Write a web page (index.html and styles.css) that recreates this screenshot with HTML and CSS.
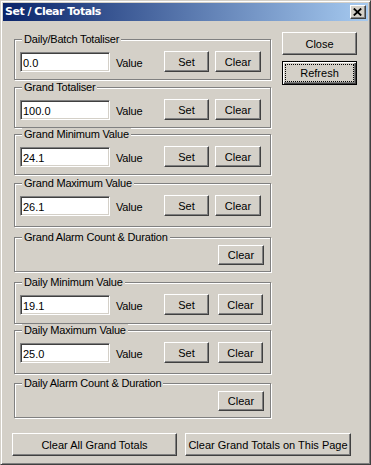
FILE: index.html
```html
<!DOCTYPE html>
<html>
<head>
<meta charset="utf-8">
<link rel="stylesheet" href="styles.css">
</head>
<body>
<div class="window">
  <div class="titlebar">
    <span class="title">Set / Clear Totals</span>
    <button class="xbtn" aria-label="Close"><svg width="9" height="8" viewBox="0 0 9 8"><path d="M0.8 0.5 L8.2 7.5 M8.2 0.5 L0.8 7.5" stroke="#000" stroke-width="1.8" fill="none"/></svg></button>
  </div>
  <div class="client">
    <div class="main">
      <div class="groups">
        <div class="group g1">
          <div class="legend">Daily/Batch Totaliser</div>
          <div class="row"><input class="field" value="0.0"><span class="unit">Value</span><button class="btn set">Set</button><button class="btn clear">Clear</button></div>
        </div>
        <div class="group g2">
          <div class="legend">Grand Totaliser</div>
          <div class="row"><input class="field" value="100.0"><span class="unit">Value</span><button class="btn set">Set</button><button class="btn clear">Clear</button></div>
        </div>
        <div class="group g3">
          <div class="legend">Grand Minimum Value</div>
          <div class="row"><input class="field" value="24.1"><span class="unit">Value</span><button class="btn set">Set</button><button class="btn clear">Clear</button></div>
        </div>
        <div class="group g4">
          <div class="legend">Grand Maximum Value</div>
          <div class="row"><input class="field" value="26.1"><span class="unit">Value</span><button class="btn set">Set</button><button class="btn clear">Clear</button></div>
        </div>
        <div class="group g5 alarm">
          <div class="legend">Grand Alarm Count &amp; Duration</div>
          <div class="row end"><button class="btn clear">Clear</button></div>
        </div>
        <div class="group g6">
          <div class="legend">Daily Minimum Value</div>
          <div class="row"><input class="field" value="19.1"><span class="unit">Value</span><button class="btn set">Set</button><button class="btn clear wide">Clear</button></div>
        </div>
        <div class="group g7">
          <div class="legend">Daily Maximum Value</div>
          <div class="row"><input class="field" value="25.0"><span class="unit">Value</span><button class="btn set">Set</button><button class="btn clear wide">Clear</button></div>
        </div>
        <div class="group g8 alarm">
          <div class="legend">Daily Alarm Count &amp; Duration</div>
          <div class="row end"><button class="btn clear">Clear</button></div>
        </div>
      </div>
      <div class="side">
        <button class="btn side-btn">Close</button>
        <button class="btn side-btn default"><span class="focus">Refresh</span></button>
      </div>
    </div>
    <div class="bottom">
      <button class="btn bottom-btn b1">Clear All Grand Totals</button>
      <button class="btn bottom-btn b2">Clear Grand Totals on This Page</button>
    </div>
  </div>
</div>
</body>
</html>
```
FILE: styles.css
```css
* { box-sizing: border-box; }
html, body { margin: 0; padding: 0; background: #d4d0c8; }
body { font-family: "Liberation Sans", Arial, sans-serif; font-size: 11px; letter-spacing: -0.2px; color: #000; }

.window {
  width: 371px;
  height: 465px;
  background: #d4d0c8;
  border: 1px solid;
  border-color: #d4d0c8 #404040 #404040 #d4d0c8;
  box-shadow: inset 1px 1px #fff, inset -1px -1px #808080;
  padding: 2px;
  display: flex;
  flex-direction: column;
}

.titlebar {
  height: 18px;
  background: linear-gradient(to right, #0a246a, #a6caf0);
  display: flex;
  align-items: center;
  justify-content: space-between;
  padding: 0 2px 0 2px;
}
.title {
  color: #fff;
  font-family: "DejaVu Sans", Verdana, sans-serif;
  font-weight: bold;
  font-size: 11px;
  letter-spacing: -0.5px;
  line-height: 18px;
}
.xbtn {
  width: 16px;
  height: 14px;
  padding: 0;
  margin: 0;
  background: #d4d0c8;
  border: 1px solid;
  border-color: #fff #404040 #404040 #fff;
  box-shadow: inset -1px -1px #808080;
  display: flex;
  align-items: center;
  justify-content: center;
}
.xbtn svg { display: block; margin-left: -1px; }

.client { flex: 1; display: flex; flex-direction: column; }

.main { display: flex; }

.groups {
  width: 257px;
  margin-left: 11px;
  display: flex;
  flex-direction: column;
}

.group {
  border: 1px solid #808080;
  box-shadow: inset 1px 1px #fff, 1px 1px #fff;
  height: 41px;
  padding: 0 0 0 5px;
}
.g1 { margin-top: 18px; }
.g2 { margin-top: 7px; }
.g3 { margin-top: 6px; }
.g4 { margin-top: 8px; height: 44px; }
.g5 { margin-top: 10px; }
.g6 { margin-top: 10px; height: 42px; }
.g7 { margin-top: 6px; height: 44px; }
.g8 { margin-top: 9px; }
.alarm { height: 35px; padding-right: 6px; }

.legend {
  width: max-content;
  height: 13px;
  line-height: 13px;
  margin-top: -7px;
  margin-left: 2px;
  padding: 0 2px;
  background: #d4d0c8;
  white-space: nowrap;
}

.row { display: flex; align-items: flex-start; margin-top: 5px; height: 21px; }
.row.end { justify-content: flex-end; margin-top: 1px; height: 20px; }

.field {
  width: 90px;
  height: 20px;
  margin: 1px 0 0 0;
  padding: 1px 0 0 2px;
  font: inherit;
  color: #000;
  background: #fff;
  border: 1px solid;
  border-color: #808080 #fff #fff #808080;
  box-shadow: inset 1px 1px #404040, inset -1px -1px #d4d0c8;
  outline: none;
}
.unit { width: 48px; margin-left: 6px; line-height: 21px; padding-top: 2px; }

.btn {
  font: inherit;
  color: #000;
  background: #d4d0c8;
  border: 1px solid;
  border-color: #fff #404040 #404040 #fff;
  box-shadow: inset -1px -1px #808080;
  padding: 0;
  margin: 0;
  text-align: center;
}
.set { width: 45px; height: 21px; }
.clear { width: 46px; height: 21px; margin-left: 6px; }
.clear.wide { width: 45px; margin-left: 9px; }
.alarm .clear { height: 20px; width: 46px; margin-left: 0; }

.side {
  display: flex;
  flex-direction: column;
  margin-left: 11px;
  margin-top: 11px;
}
.side-btn { width: 75px; height: 23px; }
.side-btn + .side-btn { margin-top: 6px; }
.default {
  border: 1px solid #000;
  box-shadow: inset 1px 1px #fff, inset -1px -1px #404040, inset -2px -2px #808080;
  height: 24px;
  padding: 2px;
}
.focus {
  display: block;
  height: 18px;
  line-height: 16px;
  border: 1px dotted #000;
}

.bottom { display: flex; margin-top: 15px; margin-left: 9px; }
.bottom-btn { height: 23px; }
.b1 { width: 165px; }
.b2 { width: 166px; margin-left: 8px; }
```
